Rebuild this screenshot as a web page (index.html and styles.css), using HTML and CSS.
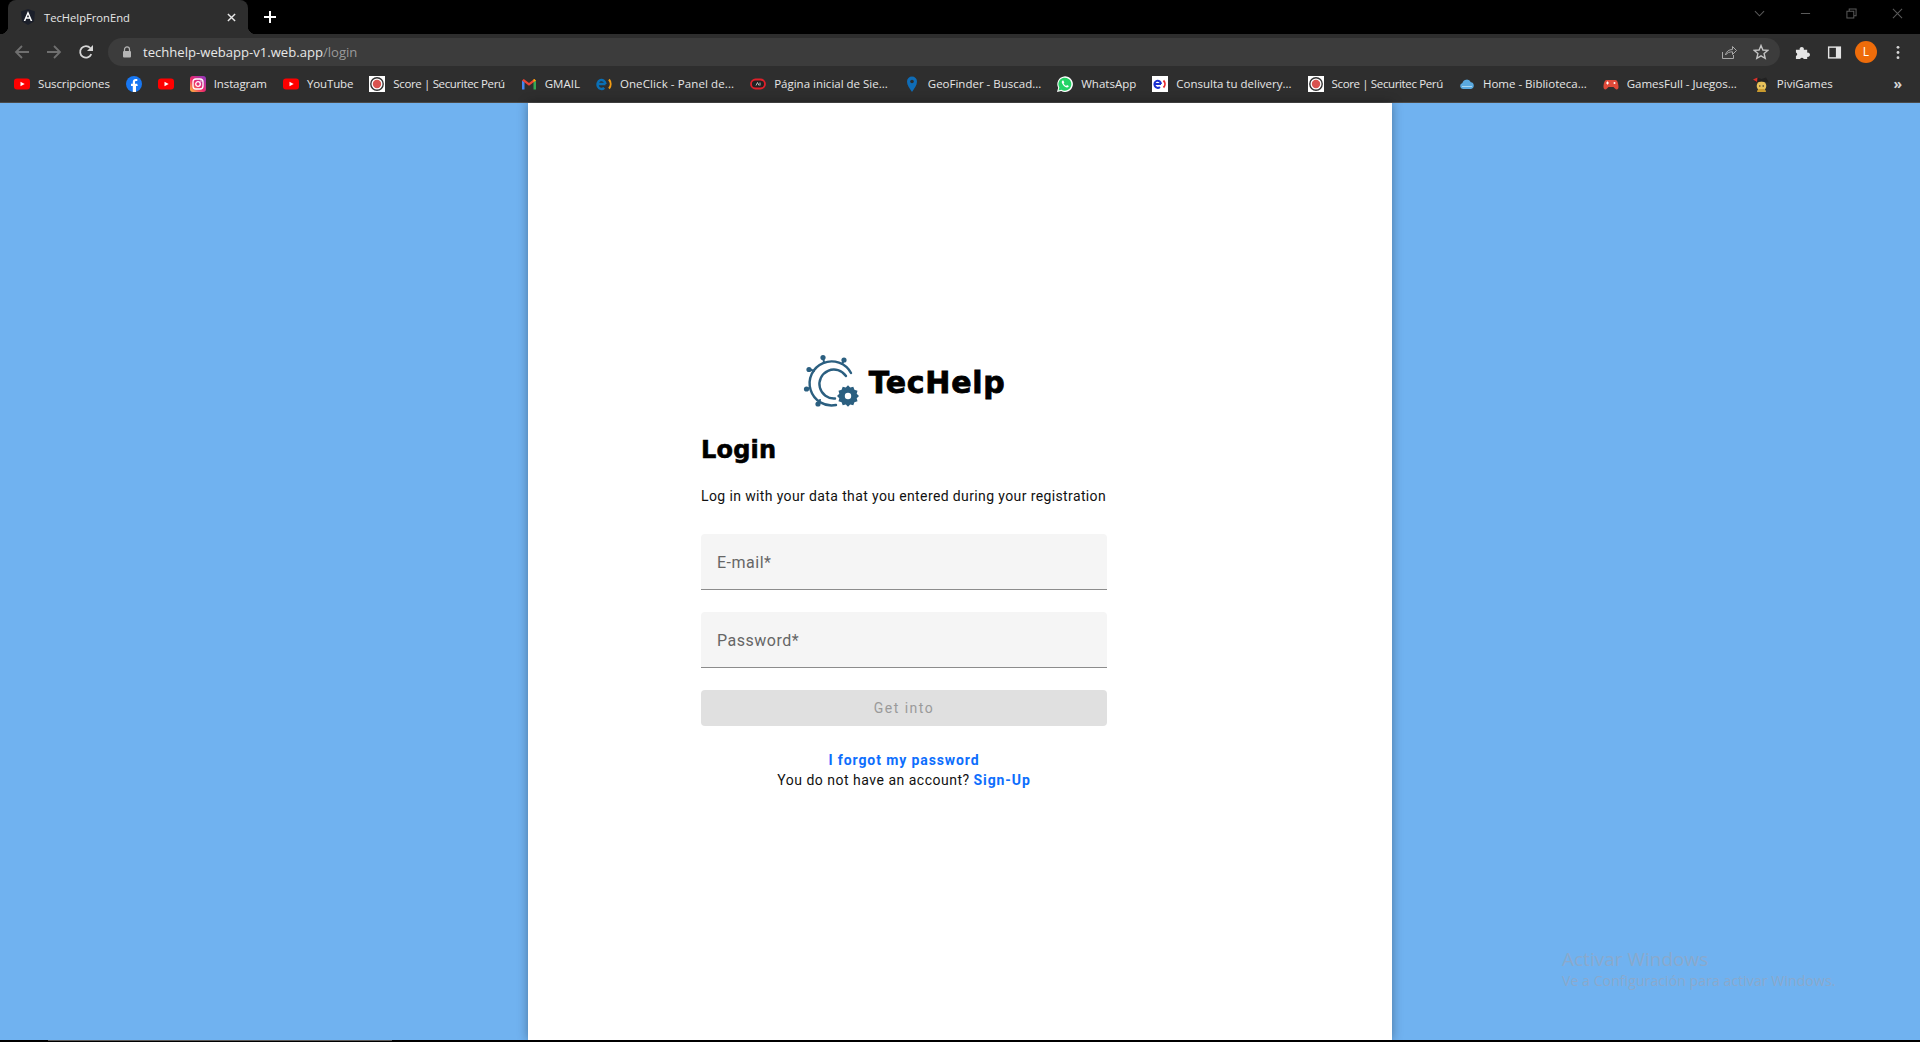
FILE: index.html
```html
<!DOCTYPE html>
<html lang="en">
<head>
<meta charset="UTF-8" />
<meta name="viewport" content="width=device-width, initial-scale=1.0"/>
<title>TecHelpFronEnd</title>
<link rel="stylesheet" href="styles.css">
</head>
<body>

<svg class="defs" width="0" height="0">
  <symbol id="fav-yt" viewBox="0 0 16 16">
    <rect x="0" y="2.5" width="16" height="11" rx="3" fill="#f00"/>
    <path d="M6.5 5.7 10.7 8l-4.2 2.3z" fill="#fff"/>
  </symbol>
  <symbol id="fav-score" viewBox="0 0 16 16">
    <rect width="16" height="16" fill="#fff"/>
    <circle cx="8" cy="8" r="6.2" fill="none" stroke="#333" stroke-width="1.4"/>
    <circle cx="8" cy="8" r="4.2" fill="#d9534f"/>
  </symbol>
</svg>

<!-- Barra de pestañas -->
<div class="tabstrip">
  <div class="tab">
    <svg class="tab__icon" viewBox="0 0 16 16">
      <path d="M8 0 15 2.5 14 12.5 8 16 2 12.5 1 2.5z" fill="#1b1f2a"/>
      <path d="M8 2 12.3 12H10.6L9.8 9.8H6.2L5.4 12H3.7zM8 5.6 6.9 8.3H9.1z" fill="#fff"/>
    </svg>
    <span class="tab__title">TecHelpFronEnd</span>
    <svg class="tab__close" viewBox="0 0 10 10"><path d="M1 1l8 8M9 1 1 9" stroke="#e8e8e8" stroke-width="1.6"/></svg>
  </div>
  <svg class="tab__new" viewBox="0 0 12 12"><path d="M6 0v12M0 6h12" stroke="#fff" stroke-width="2"/></svg>
  <div class="wincontrols">
    <svg class="wincontrols__icon" viewBox="0 0 12 12"><path d="M1 3.5 6 8.500l5-5" fill="none" stroke="#5a5a5a" stroke-width="1.1"/></svg>
    <svg class="wincontrols__icon" viewBox="0 0 12 12"><path d="M1 6h10" stroke="#5a5a5a" stroke-width="1.1"/></svg>
    <svg class="wincontrols__icon" viewBox="0 0 12 12"><path d="M1 3.5h7.5V11H1zM3.5 3.5V1H11v7.5H8.5" fill="none" stroke="#5a5a5a" stroke-width="1.1"/></svg>
    <svg class="wincontrols__icon" viewBox="0 0 12 12"><path d="M1 1l10 10M11 1 1 11" stroke="#5a5a5a" stroke-width="1.1"/></svg>
  </div>
</div>

<!-- Barra de dirección -->
<div class="toolbar">
  <div class="toolbar__nav">
    <svg class="navicon" viewBox="0 0 16 16"><path d="M15 8H2M8 2 2 8l6 6" fill="none" stroke="#6f6f6f" stroke-width="1.8"/></svg>
    <svg class="navicon" viewBox="0 0 16 16"><path d="M1 8h13M8 2l6 6-6 6" fill="none" stroke="#6f6f6f" stroke-width="1.8"/></svg>
    <svg class="navicon" viewBox="0 0 16 16"><path d="M13.3 10.2A5.8 5.8 0 1 1 12.3 4" fill="none" stroke="#d6d6d6" stroke-width="1.8"/><path d="M15 1v6H9z" fill="#d6d6d6"/></svg>
  </div>
  <div class="omnibox">
    <svg class="omnibox__lock" viewBox="0 0 10 12"><path d="M2.5 5V3.4a2.5 2.5 0 0 1 5 0V5" fill="none" stroke="#b5b5b5" stroke-width="1.2"/><rect x="1" y="5" width="8" height="6.5" rx="1" fill="#b5b5b5"/></svg>
    <span class="omnibox__url">techhelp-webapp-v1.web.app<span class="omnibox__path">/login</span></span>
    <svg class="omnibox__icon" viewBox="0 0 16 16"><path d="M1.5 8v6.5h11V11" fill="none" stroke="#a8a8a8" stroke-width="1"/><path d="M4.5 11c.5-3.5 3.5-5.500 7-5.500V2.500L15.500 6.500l-4 4V7.800c-3 0-5.500 1-7 3.200z" fill="none" stroke="#a8a8a8" stroke-width="1"/></svg>
    <svg class="omnibox__icon" viewBox="0 0 16 16"><path d="M8 1.500 9.900 6l4.800.4-3.600 3.200 1.100 4.700L8 11.800l-4.200 2.500 1.100-4.700L1.300 6.400 6.100 6z" fill="none" stroke="#c4c4c4" stroke-width="1.400"/></svg>
  </div>
  <div class="toolbar__actions">
    <svg class="action" viewBox="0 0 16 16"><path d="M1 5h4a2.300 2.300 0 1 1 4.400 0H13v3.200a2.300 2.300 0 1 1 0 4.400V15H9.300a2 2 0 0 0-3.800 0H1v-3.200a2 2 0 0 0 0-3.800z" fill="#e4e4e4"/></svg>
    <svg class="action" viewBox="0 0 16 16"><path d="M1 1.500h14v13H1z" fill="#e4e4e4"/><path d="M2.500 3h7v10h-7z" fill="#2e2e2e"/></svg>
    <span class="avatar">L</span>
    <svg class="action action--menu" viewBox="0 0 4 16"><circle cx="2" cy="2.500" r="1.500" fill="#d6d6d6"/><circle cx="2" cy="8" r="1.500" fill="#d6d6d6"/><circle cx="2" cy="13.500" r="1.500" fill="#d6d6d6"/></svg>
  </div>
</div>

<!-- Marcadores -->
<div class="bookmarks">
  <a class="bookmark bookmark--snug" href="#"><svg class="fav"><use href="#fav-yt"/></svg><span>Suscripciones</span></a>
  <a class="bookmark" href="#">
    <svg class="fav" viewBox="0 0 16 16"><circle cx="8" cy="8" r="8" fill="#1877f2"/><path d="M6.800 16V10H5V7.700h1.800V6c0-2 1.200-3 3-3l1.500.1v2h-1c-1 0-1.300.5-1.300 1.200v1.400h2.200L11.800 10H10v6z" fill="#fff"/></svg>
  </a>
  <a class="bookmark" href="#"><svg class="fav"><use href="#fav-yt"/></svg></a>
  <a class="bookmark bookmark--snug" href="#">
    <svg class="fav" viewBox="0 0 16 16">
      <defs><linearGradient id="ig" x1="0" y1="1" x2="1" y2="0"><stop offset="0" stop-color="#fdc13d"/><stop offset=".45" stop-color="#ee2a6b"/><stop offset="1" stop-color="#8a3ac8"/></linearGradient></defs>
      <rect width="16" height="16" rx="3" fill="url(#ig)"/>
      <rect x="3" y="3" width="10" height="10" rx="3" fill="none" stroke="#fff" stroke-width="1.300"/>
      <circle cx="8" cy="8" r="2.300" fill="none" stroke="#fff" stroke-width="1.300"/>
      <circle cx="11" cy="5" r=".7" fill="#fff"/>
    </svg>
    <span>Instagram</span>
  </a>
  <a class="bookmark bookmark--snug" href="#"><svg class="fav"><use href="#fav-yt"/></svg><span>YouTube</span></a>
  <a class="bookmark bookmark--tight" href="#"><svg class="fav"><use href="#fav-score"/></svg><span>Score | Securitec Perú</span></a>
  <a class="bookmark" href="#">
    <svg class="fav" viewBox="0 0 16 16">
      <path d="M1 13.500V4.500L3.500 6v7.500z" fill="#4285f4"/><path d="M15 13.500V4.500L12.500 6v7.500z" fill="#34a853"/>
      <path d="M1 4.500 2.800 3 8 7l5.200-4L15 4.500 8 9.800z" fill="#ea4335"/><path d="M12.500 6 15 4.500 13.200 3l-.7.500z" fill="#fbbc04"/>
    </svg>
    <span>GMAIL</span>
  </a>
  <a class="bookmark bookmark--loose" href="#">
    <svg class="fav" viewBox="0 0 16 16"><path d="M1.500 8h8M9.500 8a4 4.500 0 1 0-1.300 3.800" fill="none" stroke="#0a6fb5" stroke-width="2.400"/><path d="M13 3.500a7 7 0 0 1 0 9" fill="none" stroke="#f39c12" stroke-width="2"/></svg>
    <span>OneClick - Panel de...</span>
  </a>
  <a class="bookmark" href="#">
    <svg class="fav" viewBox="0 0 16 16"><rect x="1" y="3.500" width="14" height="9" rx="4.500" fill="#222" stroke="#e0202a" stroke-width="1.800"/><path d="M6 9.500 7.500 6.500 9 9.500M10 6.500v3" fill="none" stroke="#ddd" stroke-width=".8"/></svg>
    <span>Página inicial de Sie...</span>
  </a>
  <a class="bookmark" href="#">
    <svg class="fav" viewBox="0 0 16 16"><path d="M8 16C5.500 12 3 9.300 3 5.500a5 5 0 0 1 10 0C13 9.300 10.500 12 8 16z" fill="#0f6cb6"/><circle cx="8" cy="5.500" r="1.800" fill="#2d2d2d"/></svg>
    <span>GeoFinder - Buscad...</span>
  </a>
  <a class="bookmark" href="#">
    <svg class="fav" viewBox="0 0 16 16"><path d="M0 16l1.200-4.200A7.800 7.800 0 1 1 4.200 14.900z" fill="#fff"/><path d="M1.500 14.500l.8-3A6.500 6.500 0 1 1 4.500 13.700z" fill="#25d366"/><path d="M5.500 4.500c-1 .8-1 2 0 3.600 1 1.700 2.400 3 4.300 3.400 1 .2 1.900-.5 2-1.400l-1.800-1-.9.8c-1-.4-2-1.400-2.500-2.500l.7-.9-.9-2z" fill="#fff"/></svg>
    <span>WhatsApp</span>
  </a>
  <a class="bookmark" href="#">
    <svg class="fav" viewBox="0 0 16 16"><rect width="16" height="16" fill="#fff"/><path d="M2.500 8h6.500M9 8a3.300 3.600 0 1 0-1.100 3" fill="none" stroke="#1a2fd0" stroke-width="2"/><path d="M11.500 4.500a5 5 0 0 1 0 7" fill="none" stroke="#e8262a" stroke-width="1.800"/></svg>
    <span>Consulta tu delivery...</span>
  </a>
  <a class="bookmark bookmark--tight" href="#"><svg class="fav"><use href="#fav-score"/></svg><span>Score | Securitec Perú</span></a>
  <a class="bookmark" href="#">
    <svg class="fav" viewBox="0 0 16 16"><path d="M4 13a3 3 0 0 1-.6-5.900 4.500 4.500 0 0 1 8.500-.8A3.400 3.400 0 0 1 12 13z" fill="#5aa9df"/><path d="M3 10.500h10" stroke="#a9d6f2" stroke-width="1"/></svg>
    <span>Home - Biblioteca...</span>
  </a>
  <a class="bookmark" href="#">
    <svg class="fav" viewBox="0 0 16 16"><path d="M3.500 4h9c1.800 0 3 3.500 3 7 0 2.500-2 3.200-3.500 1.500L10.500 11h-5L4 12.500C2.500 14.200.5 13.500.5 11c0-3.500 1.200-7 3-7z" fill="#e04a3a"/><circle cx="11.500" cy="7" r="1" fill="#fff"/><path d="M3 7h3M4.500 5.500v3" stroke="#fff" stroke-width="1"/></svg>
    <span>GamesFull - Juegos...</span>
  </a>
  <a class="bookmark" href="#">
    <svg class="fav" viewBox="0 0 16 16"><circle cx="8.500" cy="10" r="4.800" fill="#e8c25a"/><path d="M1 6.500 4 1.500 8.500 3 13 1.500 16 6.500 8.500 5.500z" fill="#222"/><path d="M0 3.500 4.500 1.500 4 6z" fill="#d9302a"/><path d="M4 16c0-2.500 1.500-3 4.500-3s4.500.5 4.500 3z" fill="#c99a2e"/><circle cx="6.800" cy="10" r=".8" fill="#333"/><circle cx="10.200" cy="10" r=".8" fill="#333"/></svg>
    <span>PiviGames</span>
  </a>
  <span class="bookmarks__more">»</span>
</div>

<!-- Página -->
<main class="page">
  <section class="login">
    <div class="brand">
      <svg class="brand__logo" viewBox="0 0 64 62">
        <g fill="none" stroke="#2b5f80" stroke-linecap="round">
          <path d="M50 22A22 22 0 1 0 35 54" stroke-width="2.400"/>
          <path d="M45 25A14.500 14.500 0 1 0 34 47.500" stroke-width="2.400"/>
          <path d="M23 11 22 7M41 13 43 9M13 20 8 18M9 37 5 38M19 49 17 53" stroke-width="2"/>
        </g>
        <g fill="#2b5f80">
          <circle cx="22" cy="6.500" r="2.600"/><circle cx="43" cy="9" r="2.600"/><circle cx="8" cy="18.500" r="2.600"/>
          <circle cx="5.500" cy="38" r="2.600"/><circle cx="17" cy="53" r="2.600"/>
        </g>
        <path d="M47 44.200 44.800 46.500 41.700 45.700 40.600 48.700 37.500 49.700 38.300 52.800 36 55 38.300 57.200 37.500 60.300 40.600 61.300 41.700 64.300 44.800 63.500 47 65.800 49.200 63.500 52.300 64.300 53.400 61.300 56.500 60.300 55.700 57.200 58 55 55.700 52.800 56.500 49.700 53.400 48.700 52.300 45.700 49.200 46.500z" transform="translate(0 -10)" fill="#2b5f80"/>
        <circle cx="47" cy="45" r="3.200" fill="#fff"/>
      </svg>
      <span class="brand__name">TecHelp</span>
    </div>

    <form class="login__form">
      <h1 class="login__title">Login</h1>
      <p class="login__intro">Log in with your data that you entered during your registration</p>
      <div class="field"><span class="field__label">E-mail*</span></div>
      <div class="field"><span class="field__label">Password*</span></div>
      <button class="login__submit" type="button" disabled>Get into</button>
      <div class="login__links">
        <a href="#" class="link">I forgot my password</a>
        <p>You do not have an account? <a href="#" class="link">Sign-Up</a></p>
      </div>
    </form>
  </section>

  <div class="watermark">
    <div class="watermark__title">Activar Windows</div>
    <div class="watermark__text">Ve a Configuración para activar Windows.</div>
  </div>
</main>

<div class="taskbar"><span class="taskbar__app"></span></div>

</body>
</html>
```

FILE: styles.css
```css
:root {
  --chrome-bg: #2e2e2e;
  --chrome-text: #e6e6e6;
  --page-blue: #70b2f0;
  --brand-blue: #0d6efd;
}

* {
  box-sizing: border-box;
}

html, body {
  height: 100%;
}

body {
  margin: 0;
  display: flex;
  flex-direction: column;
  overflow: hidden;
  font-family: "Roboto", "Liberation Sans", sans-serif;
  background: #000;
}

.defs {
  display: block;
  height: 0;
}

/* Pestañas */
.tabstrip {
  flex: 0 0 34px;
  display: flex;
  align-items: center;
  padding-left: 8px;
  background: #000;
}

.tab {
  position: relative;
  width: 240px;
  height: 34px;
  display: flex;
  align-items: center;
  padding: 0 12px;
  background: var(--chrome-bg);
  border-radius: 8px 8px 0 0;
}

.tab::before,
.tab::after {
  content: "";
  position: absolute;
  bottom: 0;
  width: 8px;
  height: 8px;
}

.tab::before {
  left: -8px;
  background: radial-gradient(circle at 0 0, #000 8px, var(--chrome-bg) 8.5px);
}

.tab::after {
  right: -8px;
  background: radial-gradient(circle at 100% 0, #000 8px, var(--chrome-bg) 8.5px);
}

.tab__icon {
  width: 16px;
  height: 16px;
  flex: none;
}

.tab__title {
  margin-left: 8px;
  font: 11.2px "Open Sans", sans-serif;
  color: var(--chrome-text);
  flex: 1;
}

.tab__close {
  width: 9px;
  height: 9px;
}

.tab__new {
  width: 12px;
  height: 12px;
  margin-left: 16px;
}

.wincontrols {
  margin-left: auto;
  align-self: flex-start;
  display: flex;
  align-items: center;
  gap: 35px;
  padding: 8px 17px 0 0;
}

.wincontrols__icon {
  width: 11px;
  height: 11px;
}

/* Barra de dirección */
.toolbar {
  flex: 0 0 32px;
  display: flex;
  align-items: flex-start;
  padding-top: 4px;
  background: var(--chrome-bg);
}

.toolbar__nav {
  display: flex;
  align-items: center;
  gap: 16px;
  height: 28px;
  padding-left: 14px;
  width: 108px;
}

.navicon {
  width: 16px;
  height: 16px;
  flex: none;
}

.omnibox {
  width: 1672px;
  height: 28px;
  display: flex;
  align-items: center;
  padding: 0 11px 0 14px;
  gap: 16px;
  background: #3c3c3c;
  border-radius: 14px;
}

.omnibox__lock {
  width: 10px;
  height: 12px;
  flex: none;
  margin-right: -5px;
}

.omnibox__url {
  flex: 1;
  font: 13.1px "Open Sans", sans-serif;
  color: #e8e8e8;
}

.omnibox__path {
  color: #9a9a9a;
}

.omnibox__icon {
  width: 16px;
  height: 16px;
  flex: none;
}

.toolbar__actions {
  display: flex;
  align-items: center;
  height: 28px;
  padding-left: 15px;
  gap: 17px;
}

.action {
  width: 15px;
  height: 15px;
  flex: none;
}

.action--menu {
  width: 4px;
  margin-left: 2px;
}

.avatar {
  width: 22px;
  height: 22px;
  margin-left: -4px;
  border-radius: 50%;
  background: #ee6c0a;
  color: #fff;
  font: 12px/22px "Open Sans", sans-serif;
  text-align: center;
}

/* Marcadores */
.bookmarks {
  flex: 0 0 37px;
  display: flex;
  align-items: center;
  padding: 0 6px 1px;
  background: var(--chrome-bg);
  border-bottom: 1px solid #4a4a4a;
}

.bookmark {
  flex: none;
  display: flex;
  align-items: center;
  gap: 8px;
  padding: 0 8px;
  font: 11.5px "Open Sans", sans-serif;
  color: var(--chrome-text);
  text-decoration: none;
}

.bookmark--tight {
  letter-spacing: -.36px;
}

.bookmark--snug {
  letter-spacing: -.12px;
}

.bookmark--loose {
  letter-spacing: .1px;
}

.fav {
  width: 16px;
  height: 16px;
  flex: none;
}

.bookmarks__more {
  margin-left: auto;
  padding-right: 12px;
  font: bold 14px "Open Sans", sans-serif;
  color: #d6d6d6;
}

/* Página */
.page {
  flex: 1;
  position: relative;
  display: flex;
  justify-content: center;
  min-height: 0;
  background: var(--page-blue);
}

.login {
  width: 864px;
  display: flex;
  flex-direction: column;
  align-items: center;
  padding: 253px 112px 0 0;
  background: #fff;
  box-shadow: 0 0 10px rgba(0, 0, 0, .35);
}

.brand {
  display: flex;
  align-items: center;
  gap: 4px;
  height: 52px;
  margin-left: -2px;
}

.brand__logo {
  width: 64px;
  height: 62px;
  flex: none;
}

.brand__name {
  font: bold 30px "DejaVu Sans", sans-serif;
  letter-spacing: .7px;
  color: #000;
  -webkit-text-stroke: .8px #000;
}

.login__form {
  width: 406px;
  display: flex;
  flex-direction: column;
}

.login__title {
  margin: 26px 0 0;
  font: bold 24px/32px "DejaVu Sans", sans-serif;
  letter-spacing: .2px;
  color: #000;
  -webkit-text-stroke: .6px #000;
}

.login__intro {
  margin: 20px 0 28px;
  font-size: 14px;
  line-height: 20px;
  letter-spacing: .38px;
  color: #111;
}

.field {
  height: 56px;
  margin-bottom: 22px;
  padding: 2px 16px 0;
  display: flex;
  align-items: center;
  background: #f5f5f5;
  border-bottom: 1px solid #8c8c8c;
  border-radius: 4px 4px 0 0;
}

.field__label {
  font-size: 16px;
  letter-spacing: .5px;
  color: #666;
}

.login__submit {
  height: 36px;
  border: none;
  border-radius: 4px;
  background: #e0e0e0;
  color: #9a9a9a;
  font: 400 14px "Roboto", sans-serif;
  letter-spacing: 1.5px;
}

.login__links {
  margin-top: 24px;
  text-align: center;
  font-size: 14px;
  line-height: 20px;
  letter-spacing: .5px;
  color: #111;
}

.login__links p {
  margin: 0;
}

.link {
  color: var(--brand-blue);
  font-weight: 700;
  letter-spacing: .9px;
  text-decoration: none;
}

/* Marca de agua de Windows */
.watermark {
  position: absolute;
  left: 1562px;
  top: 844px;
  color: #8aa9cc;
  font-family: "Open Sans", sans-serif;
}

.watermark__title {
  font-size: 19px;
  line-height: 24px;
}

.watermark__text {
  font-size: 14.200px;
  line-height: 20px;
}

/* Barra inferior */
.taskbar {
  flex: 0 0 2px;
  padding-left: 48px;
  background: #000;
}

.taskbar__app {
  display: block;
  width: 344px;
  height: 1px;
  background: #5a5a5a;
}
```
